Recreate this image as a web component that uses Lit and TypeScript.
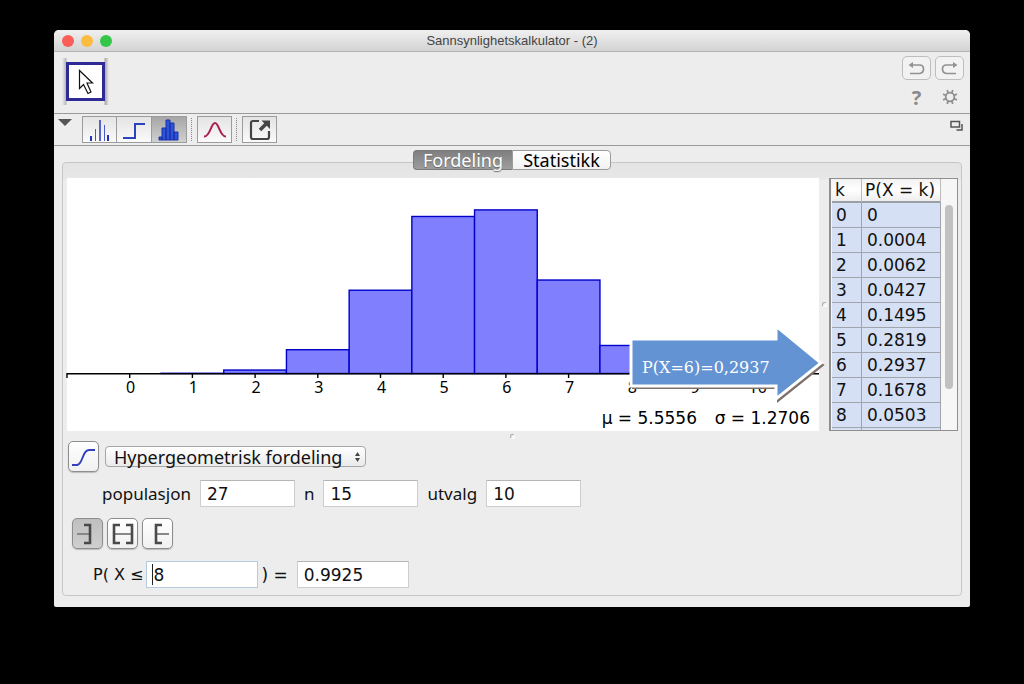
import { LitElement, html, svg, css } from "lit";
import { customElement, state } from "lit/decorators.js";
import { classMap } from "lit/directives/class-map.js";

const PROBABILITIES = ["0", "0.0004", "0.0062", "0.0427", "0.1495", "0.2819", "0.2937", "0.1678", "0.0503", "0.0078", "0.0005"];

const STEP = 62.7;
const BASE = 195.5;
const SCALE = 557;

@customElement("distribution-chart")
class DistributionChart extends LitElement {
  static styles = css`
    :host {
      display: block;
      position: relative;
      background: #fff;
      min-width: 0;
    }
    .plot {
      display: block;
      width: 100%;
      height: 100%;
      overflow: visible;
    }
    .bar {
      fill: #8080ff;
      stroke: #0000c8;
      stroke-width: 1.4;
    }
    .axis {
      stroke: #000;
      stroke-width: 1.4;
    }
    .label {
      font: 16px "Noto Sans", sans-serif;
      text-anchor: middle;
    }
    .stats {
      font: 17px "DejaVu Sans", sans-serif;
      text-anchor: end;
    }
    .callout {
      position: absolute;
      right: -8px;
      top: 145px;
      width: 200px;
      height: 84px;
      overflow: visible;
    }
    .callout-text {
      font: 16px "DejaVu Serif", serif;
      fill: #fff;
    }
  `;

  render() {
    const x = (k: number) => STEP * (k + 1);
    return html`
      <svg class="plot" viewBox="0 0 752 253" role="img" aria-label="Hypergeometrisk fordeling">
        ${PROBABILITIES.map((p, k) =>
          Number(p) > 0
            ? svg`<rect class="bar" x=${x(k - 0.5)} y=${BASE - Number(p) * SCALE} width=${STEP} height=${Number(p) * SCALE}></rect>`
            : null
        )}
        <path class="axis" d="M0 195.7H752"></path>
        ${[-1, ...PROBABILITIES.keys()].map((k) => svg`<path class="axis" d="M${x(k)} 195v5"></path>`)}
        ${PROBABILITIES.map((_, k) => svg`<text class="label" x=${x(k) + 1} y="215">${k}</text>`)}
        <text class="stats" x="630" y="246">μ = 5.5556</text>
        <text class="stats" x="743" y="246">σ = 1.2706</text>
      </svg>
      <svg class="callout" viewBox="0 0 200 84">
        <path d="M6 18H151V6L196 42L151 78V65H6Z" fill="#7d716c" stroke="#7d716c" stroke-width="2"></path>
        <path d="M4 16H149V3L194 40L149 76V63H4Z" fill="#6393d2" stroke="#fff" stroke-width="3"></path>
        <text class="callout-text" x="15" y="50">P(X=6)=0,2937</text>
      </svg>
    `;
  }
}

@customElement("probability-table")
class ProbabilityTable extends LitElement {
  static styles = css`
    :host {
      display: flex;
      box-sizing: border-box;
      overflow: hidden;
      border: 1px solid #8f8f8f;
      border-left: 2px solid #8f8f8f;
      background: #f6f6f6;
      font: 17px "DejaVu Sans", sans-serif;
    }
    .scroller {
      flex: 1;
      overflow-y: auto;
      scrollbar-width: none;
      padding-left: 1px;
    }
    .table {
      width: 100%;
      border-collapse: separate;
      border-spacing: 0;
      table-layout: fixed;
    }
    .head,
    .cell {
      box-sizing: border-box;
      height: 25px;
      padding: 0 0 0 5px;
      font-weight: 400;
      line-height: 24px;
      text-align: left;
      white-space: nowrap;
    }
    .head {
      position: sticky;
      top: 0;
      height: 24px;
      padding-left: 3px;
      line-height: 22px;
      background: linear-gradient(#f2f2f2, #fff 50%, #eee);
      border-right: 1px solid #bbb;
      border-bottom: 2px solid #9b9fa8;
    }
    .cell {
      background: #d6e0f5;
      border-right: 1px solid #a0a4ab;
      border-bottom: 1px solid #a0a4ab;
    }
    .narrow {
      width: 30px;
    }
    .cell.narrow {
      padding-left: 4px;
    }
    .track {
      width: 16px;
      padding: 26px 4px 41px;
      box-sizing: border-box;
      display: flex;
    }
    .thumb {
      flex: 1;
      border-radius: 4px;
      background: #c1c1c1;
    }
  `;

  render() {
    return html`
      <div class="scroller">
        <table class="table">
          <thead>
            <tr><th class="head narrow" scope="col">k</th><th class="head" scope="col">P(X = k)</th></tr>
          </thead>
          <tbody>
            ${PROBABILITIES.map((p, k) => html`<tr><td class="cell narrow">${k}</td><td class="cell">${p}</td></tr>`)}
          </tbody>
        </table>
      </div>
      <div class="track"><div class="thumb"></div></div>
    `;
  }
}

@customElement("app-root")
class AppRoot extends LitElement {
  @state() private interval = 0;

  static styles = css`
    :host {
      display: flex;
      box-sizing: border-box;
      min-height: 100vh;
      padding: 30px 54px 77px;
      background: #000;
      color: #111;
      font: 18px/24px "Noto Sans", sans-serif;
    }
    button,
    input,
    select {
      box-sizing: border-box;
      margin: 0;
      padding: 0;
      font: inherit;
      color: inherit;
    }
    svg {
      display: block;
    }
    .window {
      flex: 1;
      min-width: 0;
      display: flex;
      flex-direction: column;
      border-radius: 5px 5px 2px 2px;
      background: #ededed;
      overflow: hidden;
    }
    .titlebar {
      display: grid;
      grid-template-columns: 1fr auto 1fr;
      align-items: center;
      height: 22px;
      box-sizing: border-box;
      padding: 1px 8px 0;
      border-bottom: 1px solid #b4b4b4;
      background: linear-gradient(#f0f0f0, #d3d3d3);
    }
    .lights {
      display: flex;
      gap: 7px;
    }
    .light {
      width: 12px;
      height: 12px;
      border: 0;
      border-radius: 50%;
    }
    .close { background: #fb5d57; }
    .minimise { background: #fcbc40; }
    .zoom { background: #34c648; }
    .title {
      margin: 0;
      font: 13px/20px "Liberation Sans", sans-serif;
      color: #444;
    }
    .toolbar {
      display: flex;
      justify-content: space-between;
      box-sizing: border-box;
      height: 62px;
      padding: 4px 6px 0 8px;
      border-bottom: 1px solid #9a9a9a;
    }
    .tool-frame {
      align-self: flex-start;
      margin-top: 2px;
      padding: 4px;
      background: linear-gradient(90deg, #ededed, #b8b8b8 4px, #ededed 5px, #ededed 42px, #a8a8a8 43px, #ededed);
    }
    .tool {
      display: block;
      width: 39px;
      height: 39px;
      border: 3px solid #2e2a96;
      background: #fff;
    }
    .actions {
      display: grid;
      grid-template-columns: 29px 29px;
      grid-template-rows: 24px 28px;
      column-gap: 4px;
      row-gap: 3px;
      align-items: center;
    }
    .action {
      display: grid;
      place-items: center;
      width: 29px;
      height: 24px;
      border: 1px solid #bdbdbd;
      border-radius: 5px;
      background: #f2f2f2;
      color: #8a8a8a;
    }
    .plain {
      border-color: transparent;
      background: none;
      font-weight: 700;
      font-size: 20px;
    }
    .stylebar {
      display: flex;
      align-items: flex-start;
      box-sizing: border-box;
      height: 32px;
      padding: 2px 7px 0 4px;
      border-bottom: 1px solid #9a9a9a;
    }
    .flat {
      border: 0;
      background: none;
    }
    .collapse {
      margin: 3px 10px 0 0;
    }
    .group {
      display: flex;
    }
    .icon {
      display: grid;
      place-items: center;
      width: 35px;
      height: 27px;
      border: 1px solid #9c9c9c;
      background: linear-gradient(#e4e4e4, #fafafa);
    }
    .icon + .icon {
      border-left: 0;
    }
    .pressed {
      background: linear-gradient(#a6a6a6, #d0d0d0);
    }
    .dots {
      height: 23px;
      margin: 2px 5px 0 4px;
      border-left: 1px dotted #888;
    }
    .detach {
      margin: 4px 0 0 auto;
    }
    .body {
      flex: 1;
      display: flex;
      flex-direction: column;
      padding: 4px 8px 11px;
    }
    .tabs {
      position: relative;
      z-index: 1;
      display: flex;
      align-self: center;
      margin-bottom: -8px;
    }
    .tab {
      height: 20px;
      width: 99px;
      border: 1px solid #9b9b9b;
      border-radius: 0 4px 4px 0;
      background: linear-gradient(#fff, #f2f2f2);
      color: #000;
      line-height: 18px;
    }
    .tab.active {
      border-color: #7a7a7a;
      border-right: 0;
      border-radius: 4px 0 0 4px;
      background: linear-gradient(#7f7f7f, #9d9d9d);
      color: #fff;
      text-shadow: 0 1px 1px #666;
    }
    .panel {
      flex: 1;
      display: flex;
      flex-direction: column;
      box-sizing: border-box;
      padding: 15px 3px 0 4px;
      border: 1px solid #c6c6c6;
      border-radius: 4px;
      background: linear-gradient(#e4e4e4, #e7e7e7 16px, #ededed 17px);
    }
    .split {
      display: grid;
      grid-template-columns: 1fr 10px 129px;
      height: 253px;
    }
    .grip {
      align-self: center;
      justify-self: center;
      width: 5px;
      height: 5px;
      border: 1px solid #aaa;
      border-right-color: #fff;
      border-bottom-color: #fff;
      border-radius: 50%;
      background: #f4f4f4;
      box-sizing: border-box;
    }
    .grip-row {
      display: grid;
      height: 10px;
    }
    .row {
      display: flex;
      align-items: center;
    }
    .family {
      gap: 6px;
      padding-left: 1px;
    }
    .square {
      display: grid;
      place-items: center;
      width: 31px;
      height: 31px;
      border: 1px solid #8d8d8d;
      border-radius: 5px;
      background: linear-gradient(#fff, #f0f0f0);
      box-shadow: 0 1px 1px #bbb;
    }
    .square.on {
      background: linear-gradient(#bfbfbf, #cfcfcf);
    }
    .picker {
      display: grid;
      align-items: center;
      width: 261px;
    }
    .face,
    .select,
    .stepper {
      grid-area: 1 / 1;
    }
    .face {
      box-sizing: border-box;
      height: 21px;
      border: 1px solid #a6a6a6;
      border-radius: 4px;
      background: linear-gradient(#fff, #eaeaea);
    }
    .select {
      height: 27px;
      padding: 0 9px;
      border: 0;
      background: none;
      appearance: none;
    }
    .stepper {
      justify-self: end;
      margin-right: 6px;
      pointer-events: none;
    }
    .label {
      font-size: 17px;
    }
    .params {
      gap: 9px;
      margin-top: 8px;
      padding-left: 35px;
    }
    .field {
      width: 95px;
      height: 27px;
      padding: 0 6px;
      border: 1px solid #cdcdcd;
      border-top-color: #b5b5b5;
      border-radius: 0;
      background: #fff;
      outline: 0;
      font: 17px "DejaVu Sans", sans-serif;
    }
    .wide {
      width: 112px;
    }
    .focused {
      border-color: #b4cbe0;
      background: linear-gradient(#222, #222) 5px 2px / 1px 21px no-repeat #fff;
    }
    .intervals {
      gap: 4px;
      margin-top: 11px;
      padding-left: 5px;
    }
    .result {
      gap: 3px;
      margin-top: 12px;
      padding-left: 26px;
    }
    .bound {
      font: 16px "DejaVu Sans", sans-serif;
    }
    .equals {
      margin-right: 6px;
      font: 17px "DejaVu Sans", sans-serif;
    }
  `;

  private intervalButton(index: number, label: string, paths: unknown) {
    return html`<button
      class=${classMap({ square: true, on: this.interval === index })}
      aria-label=${label}
      @click=${() => (this.interval = index)}
    >
      <svg width="28" height="24" viewBox="0 0 28 24" fill="none">${paths}</svg>
    </button>`;
  }

  render() {
    return html`
      <main class="window">
        <header class="titlebar">
          <div class="lights">
            <button class="light close" aria-label="Lukk"></button>
            <button class="light minimise" aria-label="Minimer"></button>
            <button class="light zoom" aria-label="Zoom"></button>
          </div>
          <h1 class="title">Sannsynlighetskalkulator - (2)</h1>
        </header>

        <div class="toolbar">
          <div class="tool-frame">
            <button class="tool" aria-label="Flytt">
              <svg width="33" height="33" viewBox="0 0 33 33">
                <path d="M10.5 5.5V23.5L14.5 19.5L19 28.5L22 27L18 18H23.5Z" fill="#fff" stroke="#111" stroke-width="1.2"></path>
              </svg>
            </button>
          </div>
          <div class="actions">
            <button class="action" aria-label="Angre">
              <svg width="19" height="16" viewBox="0 0 19 16" fill="none" stroke="#929292" stroke-width="1.7">
                <path d="M4 5H12.5Q16.5 5 16.5 9T12.5 13.500H3"></path>
                <path d="M1.500 5L6 2V8Z" fill="#929292" stroke="none"></path>
              </svg>
            </button>
            <button class="action" aria-label="Gjør om">
              <svg width="19" height="16" viewBox="0 0 19 16" fill="none" stroke="#929292" stroke-width="1.7">
                <path d="M15 5H6.500Q2.500 5 2.500 9T6.500 13.500H16"></path>
                <path d="M17.500 5L13 2V8Z" fill="#929292" stroke="none"></path>
              </svg>
            </button>
            <button class="action plain" aria-label="Hjelp">?</button>
            <button class="action plain" aria-label="Innstillinger">
              <svg width="16" height="16" viewBox="0 0 16 16" fill="none" stroke="#8f8f8f" stroke-width="1.8">
                <circle cx="8" cy="8" r="4.300"></circle>
                ${[22.5, 67.5, 112.5, 157.5, 202.5, 247.5, 292.5, 337.5].map(
                  (a) => svg`<path d="M8 4V0.5" transform="rotate(${a} 8 8)"></path>`
                )}
              </svg>
            </button>
          </div>
        </div>

        <div class="stylebar">
          <button class="flat collapse" aria-label="Vis stillinje">
            <svg width="14" height="7" viewBox="0 0 14 7"><path d="M0 0H14L7 7Z" fill="#555"></path></svg>
          </button>
          <div class="group">
            <button class="icon" aria-label="Stolper">
              <svg width="22" height="24" viewBox="0 0 22 24" stroke="#2233b8" fill="none">
                <path d="M2 18V23M19 17V23" stroke-width="2"></path>
                <path d="M6.500 11V23M15.500 7V23" stroke-width="1" stroke="#4a58c4"></path>
                <path d="M11 2V23" stroke-width="1.500"></path>
              </svg>
            </button>
            <button class="icon" aria-label="Trapp">
              <svg width="24" height="22" viewBox="0 0 24 22" stroke="#2b44bd" stroke-width="2" fill="none">
                <path d="M1 19H13V5H23"></path>
              </svg>
            </button>
            <button class="icon pressed" aria-label="Histogram">
              <svg width="22" height="22" viewBox="0 0 22 22" fill="#2b55d8" stroke="#1b2fa8" stroke-width="1">
                <path d="M1 21V18H4V21ZM4 21V9H8V21ZM8 21V1H12V21ZM12 21V4H16V21ZM16 21V13H20V21Z"></path>
              </svg>
            </button>
          </div>
          <div class="dots"></div>
          <button class="icon" aria-label="Normalkurve">
            <svg width="24" height="20" viewBox="0 0 24 20" stroke="#ad1f50" stroke-width="2" fill="none">
              <path d="M1 16.500C7 17 8 3 12 3S17 17 23 16.500"></path>
            </svg>
          </button>
          <div class="dots"></div>
          <button class="icon" aria-label="Eksporter">
            <svg width="22" height="22" viewBox="0 0 22 22" stroke="#444" stroke-width="2.200" fill="none">
              <path d="M10 2H4Q2 2 2 4V18Q2 20 4 20H18Q20 20 20 18V12"></path>
              <path d="M11 11L17 5" stroke-width="3.500"></path>
              <path d="M12.500 1.500H21V10Z" fill="#444" stroke="none"></path>
            </svg>
          </button>
          <button class="flat detach" aria-label="Løsne vindu">
            <svg width="13" height="11" viewBox="0 0 13 11" fill="none" stroke="#555">
              <path d="M1 1.500H9.500V7H1Z" stroke-width="1.500"></path>
              <path d="M12 4V10H6.500" stroke-width="1.500"></path>
            </svg>
          </button>
        </div>

        <div class="body">
          <div class="tabs" role="tablist">
            <button class="tab active" role="tab" aria-selected="true">Fordeling</button>
            <button class="tab" role="tab" aria-selected="false">Statistikk</button>
          </div>
          <section class="panel">
            <div class="split">
              <distribution-chart></distribution-chart>
              <div class="grip"></div>
              <probability-table></probability-table>
            </div>
            <div class="grip-row"><div class="grip"></div></div>

            <div class="row family">
              <button class="square" aria-label="Kumulativ">
                <svg width="25" height="20" viewBox="0 0 25 20" fill="none" stroke="#3040c0" stroke-width="1.800">
                  <path d="M1 18H6C12 18 11 3 18 3H24"></path>
                </svg>
              </button>
              <div class="picker">
                <div class="face"></div>
                <select class="select" aria-label="Fordeling">
                  <option>Hypergeometrisk fordeling</option>
                </select>
                <svg class="stepper" width="5" height="10" viewBox="0 0 5 10" fill="#444">
                  <path d="M0 4L2.500 0L5 4ZM0 6H5L2.500 10Z"></path>
                </svg>
              </div>
            </div>

            <div class="row params">
              <label class="label" for="population">populasjon</label>
              <input class="field" id="population" value="27" />
              <label class="label" for="n">n</label>
              <input class="field" id="n" value="15" />
              <label class="label" for="sample">utvalg</label>
              <input class="field" id="sample" value="10" />
            </div>

            <div class="row intervals">
              ${this.intervalButton(0, "Venstresidig", svg`
                <path d="M3 12H16" stroke="#888" stroke-width="2"></path>
                <path d="M10 3H16V21H10" stroke="#4a4a4a" stroke-width="2.600"></path>`)}
              ${this.intervalButton(1, "Intervall", svg`
                <path d="M6 12H22" stroke="#888" stroke-width="2"></path>
                <path d="M11 3H5V21H11M17 3H23V21H17" stroke="#4a4a4a" stroke-width="2.600"></path>`)}
              ${this.intervalButton(2, "Høyresidig", svg`
                <path d="M13 12H25" stroke="#888" stroke-width="2"></path>
                <path d="M18 3H12V21H18" stroke="#4a4a4a" stroke-width="2.600"></path>`)}
            </div>

            <div class="row result">
              <label class="bound" for="upper">P( X ≤</label>
              <input class="field wide focused" id="upper" value="8" />
              <label class="equals" for="probability">) =</label>
              <input class="field wide" id="probability" value="0.9925" />
            </div>
          </section>
        </div>
      </main>
    `;
  }
}
